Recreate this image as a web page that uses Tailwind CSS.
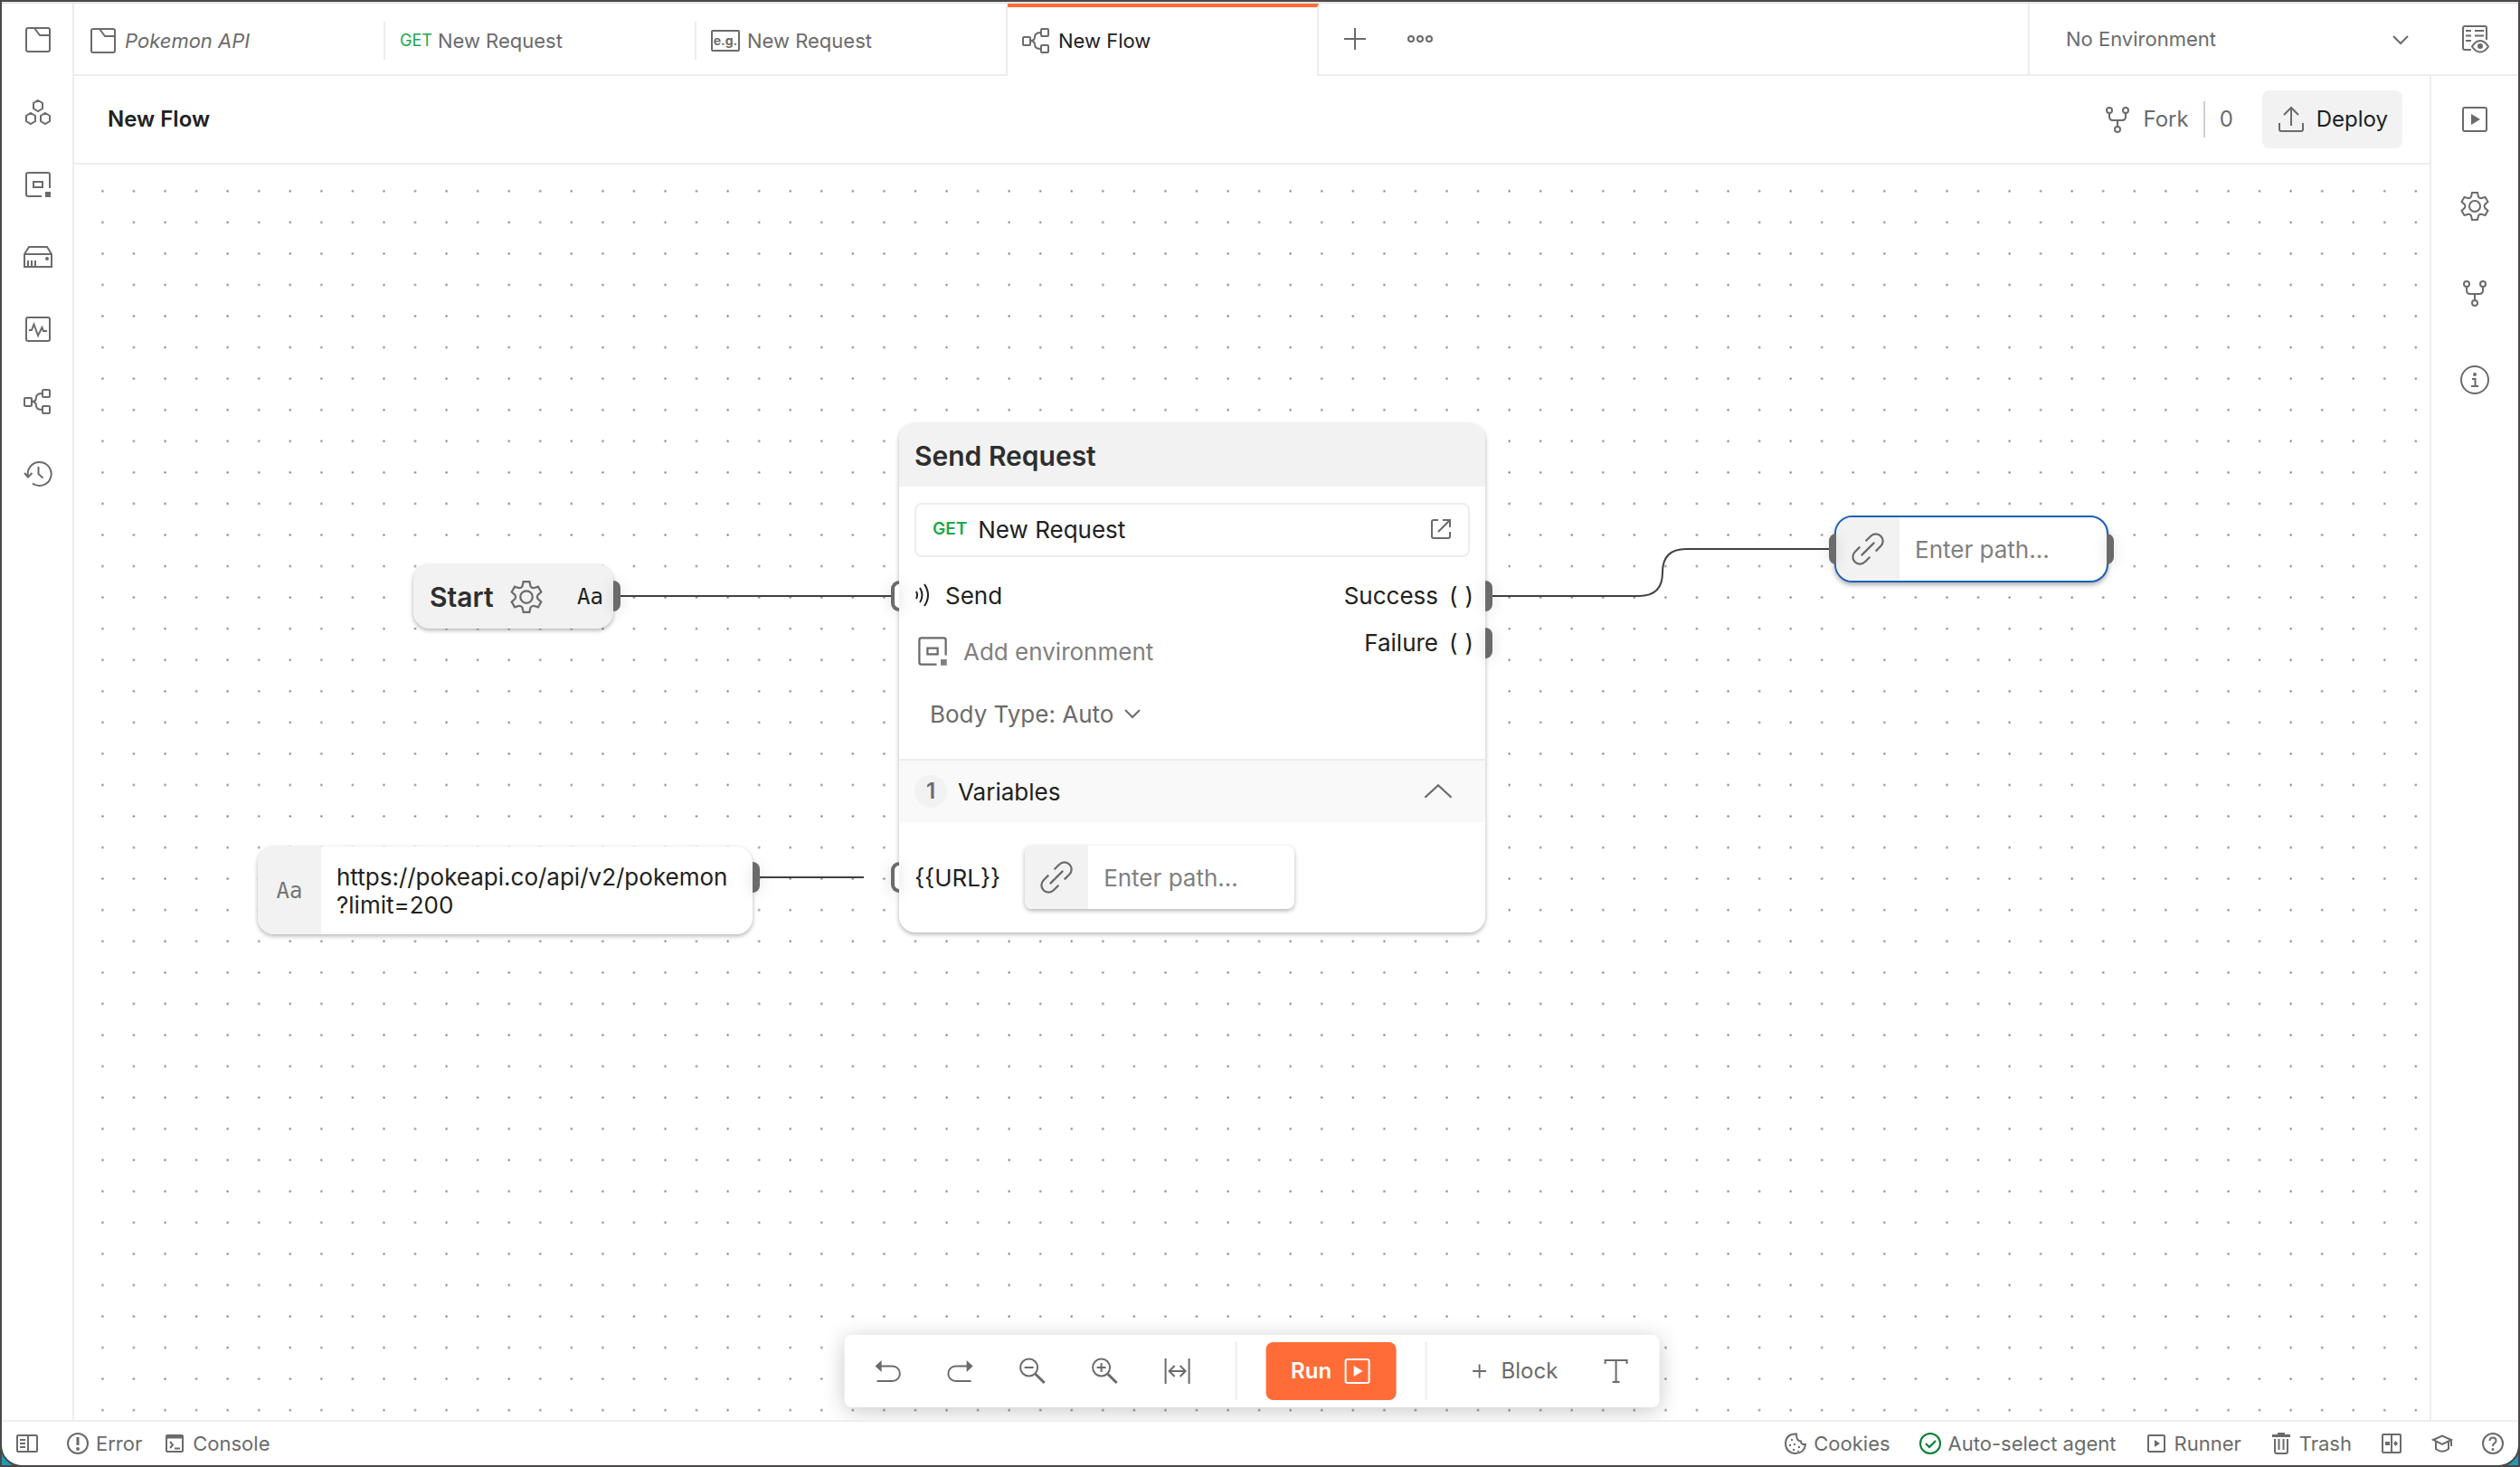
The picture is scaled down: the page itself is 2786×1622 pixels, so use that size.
<!DOCTYPE html>
<html lang="en">
<head>
<meta charset="utf-8">
<title>New Flow</title>
<script src="https://cdn.jsdelivr.net/npm/@tailwindcss/browser@4"></script>
</head>
<body class="font-[Inter,sans-serif] text-[#6b6b6b]">

<!-- Icon sprite -->
<svg class="hidden" aria-hidden="true">
  <defs>
    <symbol id="i-folder" viewBox="0 0 32 32"><rect x="3" y="3" width="26" height="26" rx="2"/><path d="M11 3h1l6 8h11"/></symbol>
    <symbol id="i-api" viewBox="0 0 32 32"><path d="M16 3l5 3v6l-5 3-5-3V6zM8 17l5 3v6l-5 3-5-3v-6zM24 17l5 3v6l-5 3-5-3v-6z"/></symbol>
    <symbol id="i-env" viewBox="0 0 32 32"><path d="M20 29H5q-2 0-2-2V5q0-2 2-2h22q2 0 2 2v15"/><rect x="11" y="13" width="10" height="6"/><path d="M24 24h6v6h-6z" fill="currentColor" stroke="none"/></symbol>
    <symbol id="i-mock" viewBox="0 0 32 32"><path d="M1 13l5-8h20l5 8v14H1zM1 13h30M5 20v7M9 20v7M13 20v7"/><circle cx="26" cy="18" r="2" fill="currentColor" stroke="none"/></symbol>
    <symbol id="i-monitor" viewBox="0 0 32 32"><rect x="3" y="3" width="26" height="26" rx="2"/><path d="M6 17h3l2.500-6.500L16 23l4.500-9L22 18h4"/></symbol>
    <symbol id="i-flow" viewBox="0 0 32 32"><rect x="1" y="12" width="8" height="9" rx="1"/><rect x="21" y="3" width="8" height="8" rx="1"/><rect x="21" y="21" width="8" height="8" rx="1"/><path d="M9 16q5 0 5-4.500Q14 7 21 7M9 16q5 0 5 4.500Q14 25 21 25"/></symbol>
    <symbol id="i-history" viewBox="0 0 32 32"><path d="M5 19A13 13 0 1 1 10 26.500M1 15l4 4.500L9.500 15M16.500 8v8l5 4.500"/></symbol>
    <symbol id="i-look" viewBox="0 0 32 32"><path d="M12 28H5q-2 0-2-2V4q0-2 2-2h22q2 0 2 2v13M6 7h6M16 7h10M6 12.500h6M16 12.500h10M6 18h6M13 24.500q4-6.500 9-6.500t9 6.500q-4 6-9 6t-9-6z"/><circle cx="22" cy="24" r="3" fill="currentColor" stroke="none"/></symbol>
    <symbol id="i-play" viewBox="0 0 32 32"><rect x="3" y="3" width="26" height="26" rx="2"/><path d="M12 10l10 6-10 6z" fill="currentColor" stroke="none"/></symbol>
    <symbol id="i-gear" viewBox="0 0 32 32"><path d="M13 1h6l1 4.500q1 1.800 3.100 1.800l4.400-1.400 3 5.200-3.400 3.100q-1.100 1.800 0 3.600l3.400 3.100-3 5.200-4.400-1.400q-2.100 0-3.100 1.800L19 31h-6l-1-4.500q-1-1.800-3.100-1.800l-4.400 1.400-3-5.200 3.400-3.100q1.100-1.800 0-3.600L1.500 11.100l3-5.200 4.400 1.400q2.100 0 3.100-1.800z"/><circle cx="16" cy="16" r="6"/></symbol>
    <symbol id="i-fork" viewBox="0 0 32 32"><circle cx="7" cy="6" r="3"/><circle cx="25" cy="6" r="3"/><circle cx="16" cy="27" r="3"/><path d="M7 9v4q0 4 4 4h10q4 0 4-4V9M16 17v7"/></symbol>
    <symbol id="i-info" viewBox="0 0 32 32"><circle cx="16" cy="16" r="15"/><path d="M13 15h3.500v8M12 23h8"/><circle cx="16" cy="10" r="2" fill="currentColor" stroke="none"/></symbol>
    <symbol id="i-upload" viewBox="0 0 32 32"><path d="M3 20v7q0 2 2 2h22q2 0 2-2v-7M16 3v20M8 11l8-8 8 8"/></symbol>
    <symbol id="i-down" viewBox="0 0 32 32"><path d="M8 12l8 8 8-8"/></symbol>
    <symbol id="i-up" viewBox="0 0 32 32"><path d="M3 22l13-12 13 12"/></symbol>
    <symbol id="i-plus" viewBox="0 0 32 32"><path d="M16 4v24M4 16h24"/></symbol>
    <symbol id="i-dots" viewBox="0 0 32 32"><circle cx="6" cy="16" r="3"/><circle cx="16" cy="16" r="3"/><circle cx="26" cy="16" r="3"/></symbol>
    <symbol id="i-link" viewBox="0 0 32 32"><path transform="rotate(-45 16 16)" d="M20 9h7a7 7 0 0 1 0 14h-7M12 9H5a7 7 0 0 0 0 14h7M7 16h18"/></symbol>
    <symbol id="i-open" viewBox="0 0 24 24"><path d="M9 2H4Q2 2 2 4v16q0 2 2 2h16q2 0 2-2v-5M14 2h8v8M22 2L9 15"/></symbol>
    <symbol id="i-signal" viewBox="0 0 18 28"><path d="M2 10q2 4 0 8M6 6q5 8 0 16M11 2q8 12 0 24"/></symbol>
    <symbol id="i-undo" viewBox="0 0 32 32"><path d="M2 10.500L9 4v13z" fill="currentColor" stroke="none"/><path d="M8 10.500h13a8 8 0 0 1 0 16.500H4"/></symbol>
    <symbol id="i-redo" viewBox="0 0 32 32"><path d="M30 10.500L23 4v13z" fill="currentColor" stroke="none"/><path d="M24 10.500H11a8 8 0 0 0 0 16.500h17"/></symbol>
    <symbol id="i-zoomout" viewBox="0 0 32 32"><circle cx="12" cy="12" r="9.500"/><path d="M7 12h10"/><path d="M19 19l10 10" stroke-width="3"/></symbol>
    <symbol id="i-zoomin" viewBox="0 0 32 32"><circle cx="12" cy="12" r="9.500"/><path d="M7 12h10M12 7v10"/><path d="M19 19l10 10" stroke-width="3"/></symbol>
    <symbol id="i-fit" viewBox="0 0 32 32"><path d="M3 2v28M29 2v28M7 16h18M13 10l-6 6 6 6M19 10l6 6-6 6"/></symbol>
    <symbol id="i-type" viewBox="0 0 32 32"><path d="M4 8V4h24v4M16 4v24M12 28h8"/></symbol>
    <symbol id="i-panel" viewBox="0 0 24 24"><rect x="1" y="3" width="22" height="18" rx="1"/><path d="M13 3v18M4 8h6M4 12h6M4 16h6"/></symbol>
    <symbol id="i-error" viewBox="0 0 24 24"><circle cx="12" cy="12" r="11"/><path d="M12 5v9" stroke-width="3"/><circle cx="12" cy="18" r="2" fill="currentColor" stroke="none"/></symbol>
    <symbol id="i-console" viewBox="0 0 24 24"><rect x="3" y="3" width="18" height="18" rx="1"/><path d="M3 5h18" stroke-width="3"/><path d="M7 10l3 3.500L7 17M12 17.500h6"/></symbol>
    <symbol id="i-cookie" viewBox="0 0 24 24"><path d="M13 1.500Q1.500 1 1 12q.5 10.500 11 11 10-.5 11-10-5 .5-5-3.500-5 0-5-8z"/><path d="M8 7v2M6 13v2M11 12v2M10 18v2M16 15v2M15 20v1"/></symbol>
    <symbol id="i-check" viewBox="0 0 24 24"><circle cx="12" cy="12" r="11"/><path d="M7 12l4 4 7-7"/></symbol>
    <symbol id="i-runner" viewBox="0 0 24 24"><rect x="3" y="3" width="18" height="18" rx="1"/><path d="M10 8l6 4-6 4z" fill="currentColor" stroke="none"/></symbol>
    <symbol id="i-trash" viewBox="0 0 24 24"><path d="M2 3.500h20" stroke-width="3"/><path d="M8 1h8M5 7v14q0 2 2 2h10q2 0 2-2V7M9.500 7v12M14.500 7v12"/></symbol>
    <symbol id="i-split" viewBox="0 0 24 24"><rect x="2" y="2" width="20" height="20" rx="1"/><path d="M12 2v20"/><path d="M5 10h5v4H5z" fill="currentColor" stroke="none"/><path d="M16.500 9l2.500 3-2.500 3-2.500-3z" fill="currentColor" stroke="none"/></symbol>
    <symbol id="i-learn" viewBox="0 0 24 24"><path d="M2 8l10-4.500L22 8l-10 5zM5 10v8q7 5.500 14 0v-8M22 8v7"/></symbol>
    <symbol id="i-help" viewBox="0 0 24 24"><circle cx="12" cy="12" r="11"/><path d="M8.500 9q0-3.500 3.500-3.500T15.500 9q0 2-2 3-1.500.8-1.500 3"/><circle cx="12" cy="18.500" r="1.500" fill="currentColor" stroke="none"/></symbol>
  </defs>
</svg>

<div class="flex min-h-screen flex-col border-2 border-[#4a4848] bg-[#1f9bb5]">
<div class="flex grow flex-col overflow-hidden rounded-b-[22px] border-t-2 border-[#e6e5e4] bg-white shadow-[0_0_0_2px_#4a4848]">

  <div class="flex grow">
    <!-- Left rail -->
    <nav class="flex w-20 shrink-0 flex-col border-r-2 border-[#ededed] pl-0.5" aria-label="Workspace">
      <button class="grid h-20 place-items-center" aria-label="Collections"><svg class="size-8 fill-none stroke-current stroke-2"><use href="#i-folder"/></svg></button>
      <button class="grid h-20 place-items-center" aria-label="APIs"><svg class="size-8 fill-none stroke-current stroke-2"><use href="#i-api"/></svg></button>
      <button class="grid h-20 place-items-center" aria-label="Environments"><svg class="size-8 fill-none stroke-current stroke-2"><use href="#i-env"/></svg></button>
      <button class="grid h-20 place-items-center" aria-label="Mock servers"><svg class="size-8 fill-none stroke-current stroke-2"><use href="#i-mock"/></svg></button>
      <button class="grid h-20 place-items-center" aria-label="Monitors"><svg class="size-8 fill-none stroke-current stroke-2"><use href="#i-monitor"/></svg></button>
      <button class="grid h-20 place-items-center" aria-label="Flows"><svg class="size-8 fill-none stroke-current stroke-2"><use href="#i-flow"/></svg></button>
      <button class="grid h-20 place-items-center" aria-label="History"><svg class="size-8 fill-none stroke-current stroke-2"><use href="#i-history"/></svg></button>
    </nav>

    <div class="flex min-w-0 grow flex-col">
      <!-- Tab bar -->
      <div class="flex h-20 items-center border-b-2 border-[#ededed] text-[22px]">
        <button class="flex h-full w-[344px] items-center border-t-4 border-transparent pl-4"><span class="flex grow items-center gap-2"><svg class="size-8 fill-none stroke-current stroke-2"><use href="#i-folder"/></svg><i>Pokemon API</i></span><span class="h-[42px] w-0.5 bg-[#ededed]"></span></button>
        <button class="flex h-full w-[344px] items-center border-t-4 border-transparent pl-4"><span class="flex grow items-center gap-[6px]"><span class="text-lg text-[#1ba94c]">GET</span>New Request</span><span class="h-[42px] w-0.5 bg-[#ededed]"></span></button>
        <button class="flex h-full w-[344px] items-center gap-2 border-t-4 border-r-2 border-t-transparent border-r-[#ededed] pl-4"><span class="grid h-6 w-8 place-items-center rounded-xs border-2 border-current text-sm leading-4 font-bold">e.g.</span>New Request</button>
        <button class="relative -mb-0.5 flex h-20 w-[344px] items-center gap-2 border-t-4 border-r-2 border-t-[#ff6c37] border-r-[#ededed] bg-white pb-0.5 pl-4 text-[#212121]"><svg class="size-8 fill-none stroke-[#6b6b6b] stroke-2"><use href="#i-flow"/></svg>New Flow</button>
        <button class="ml-1 grid h-full w-18 place-items-center" aria-label="New tab"><svg class="size-8 fill-none stroke-current stroke-2"><use href="#i-plus"/></svg></button>
        <button class="grid h-full w-18 place-items-center" aria-label="Tab options"><svg class="size-8 fill-none stroke-current stroke-2"><use href="#i-dots"/></svg></button>
        <div class="relative ml-auto h-full w-[446px] border-l-2 border-[#ededed]">
          <select class="h-full w-full appearance-none bg-transparent pl-10" aria-label="Environment"><option>No Environment</option></select>
          <svg class="pointer-events-none absolute top-6 right-[18px] size-8 fill-none stroke-current stroke-2"><use href="#i-down"/></svg>
        </div>
        <button class="grid h-full w-24 place-items-center" aria-label="Environment quick look"><svg class="size-8 fill-none stroke-current stroke-2"><use href="#i-look"/></svg></button>
      </div>

      <div class="flex grow">
        <div class="flex min-w-0 grow flex-col">
          <!-- Flow header -->
          <header class="flex h-[98px] items-center border-b-2 border-[#ededed] pr-[30px] pl-[37px] text-2xl">
            <h1 class="grow font-semibold text-[#212121]">New Flow</h1>
            <div class="flex items-center gap-4">
              <button class="flex items-center gap-3"><svg class="size-8 fill-none stroke-current stroke-2"><use href="#i-fork"/></svg>Fork</button>
              <span class="h-10 w-0.5 bg-[#cfcfcf]"></span>
              <span>0</span>
            </div>
            <button class="ml-8 flex h-16 items-center gap-3 rounded-lg bg-[#f2f2f2] px-4 text-[#212121]"><svg class="size-8 fill-none stroke-[#6b6b6b] stroke-2"><use href="#i-upload"/></svg>Deploy</button>
          </header>

          <!-- Canvas -->
          <main class="relative grow overflow-hidden text-[26px] text-[#212121]">
            <svg class="absolute inset-0 h-full w-full" aria-hidden="true">
              <defs>
                <pattern id="grid" x="14" y="12" width="34.560" height="34.560" patternUnits="userSpaceOnUse"><rect x="16.400" y="16.300" width="2" height="2" fill="#6e6e6e"/></pattern>
              </defs>
              <rect width="100%" height="100%" fill="url(#grid)"/>
              <g fill="none" stroke="#424040" stroke-width="2">
                <path d="M604 477h300"/>
                <path d="M758 788h115"/>
                <path d="M1568 477h162q26 0 26-26t26-26h158"/>
              </g>
            </svg>

            <!-- Start block -->
            <section class="absolute top-[442px] left-[375px] flex h-[71px] w-[221px] items-center rounded-[18px] bg-[#f2f2f2] pr-[11px] pl-[18px] shadow-[0_2px_5px_rgba(0,0,0,0.3)]">
              <h2 class="text-3xl font-semibold text-[#2e2e2e]">Start</h2>
              <button class="ml-[18px]" aria-label="Start settings"><svg class="size-9 fill-none stroke-[#6b6b6b] stroke-2"><use href="#i-gear"/></svg></button>
              <span class="ml-auto font-['DejaVu_Sans_Mono',monospace] text-2xl">Aa</span>
              <span class="absolute top-[18px] -right-2 h-[34px] w-2 rounded-r-lg bg-[#6b6b6b] shadow-[0_2px_16px_rgba(0,0,0,0.15)]"></span>
            </section>

            <!-- URL text block -->
            <section class="absolute top-[754px] left-[203px] flex h-[97px] w-[547px] rounded-[18px] bg-white shadow-[0_2px_5px_rgba(0,0,0,0.3)]">
              <span class="grid w-[70px] place-items-center rounded-l-[18px] bg-[#f2f2f2] font-['DejaVu_Sans_Mono',monospace] text-2xl text-[#757575]">Aa</span>
              <textarea class="my-auto h-[62px] grow resize-none overflow-hidden pl-[17px] leading-[31px]" aria-label="Text value">https://pokeapi.co/api/v2/pokemon
?limit=200</textarea>
              <span class="absolute top-[17px] -right-2 h-[34px] w-2 rounded-r-lg bg-[#6b6b6b] shadow-[0_2px_16px_rgba(0,0,0,0.15)]"></span>
            </section>

            <!-- Send Request block -->
            <section class="absolute top-[286px] left-[912px] flex w-[648px] flex-col rounded-[18px] bg-white shadow-[0_2px_5px_rgba(0,0,0,0.3)]">
              <h2 class="flex h-[70px] items-center rounded-t-[18px] bg-[#f2f2f2] px-[17px] pt-0.5 text-3xl font-semibold text-[#2e2e2e]">Send Request</h2>
              <a href="#" class="mx-[17px] mt-[18px] flex h-[60px] items-center gap-3 rounded-lg border-2 border-[#ededed] px-[18px] pb-0.5">
                <span class="text-[19px] font-semibold text-[#1ba94c]">GET</span>
                <span class="grow">New Request</span>
                <svg class="size-6 fill-none stroke-[#6b6b6b] stroke-2"><use href="#i-open"/></svg>
              </a>
              <div class="mt-4 flex">
                <div class="grow">
                  <div class="relative flex h-[52px] items-center gap-4 pl-[17px]">
                    <span class="absolute top-[10px] -left-[9px] h-[34px] w-[9px] rounded-l-[9px] border-4 border-r-0 border-[#6b6b6b] bg-white shadow-[0_2px_16px_rgba(0,0,0,0.15)]"></span>
                    <svg class="h-7 w-[18px] fill-none stroke-current stroke-2"><use href="#i-signal"/></svg>Send
                  </div>
                  <button class="flex h-[72px] items-center gap-4 pl-[19px] text-[#808080]"><svg class="size-9 fill-none stroke-[#6b6b6b] stroke-2"><use href="#i-env"/></svg>Add environment</button>
                  <label class="flex h-[66px] items-center gap-1 pl-[34px] text-[#6b6b6b]">
                    <select class="appearance-none bg-transparent" aria-label="Body type"><option>Body Type: Auto</option></select>
                    <svg class="size-8 fill-none stroke-current stroke-2"><use href="#i-down"/></svg>
                  </label>
                </div>
                <div>
                  <div class="relative flex h-[52px] items-center justify-end gap-3 pr-[13px]">Success<span class="flex gap-2"><span>(</span><span>)</span></span>
                    <span class="absolute top-[10px] -right-2 h-[34px] w-2 rounded-r-lg bg-[#6b6b6b] shadow-[0_2px_16px_rgba(0,0,0,0.15)]"></span>
                  </div>
                  <div class="relative flex h-[52px] items-center justify-end gap-3 pr-[13px]">Failure<span class="flex gap-2"><span>(</span><span>)</span></span>
                    <span class="absolute top-[10px] -right-2 h-[34px] w-2 rounded-r-lg bg-[#6b6b6b] shadow-[0_2px_16px_rgba(0,0,0,0.15)]"></span>
                  </div>
                </div>
              </div>
              <button class="mt-[17px] flex h-[70px] items-center gap-3 border-t-2 border-[#ededed] bg-[#f9f9f9] pr-[34px] pl-[17px]">
                <span class="grid size-9 place-items-center rounded-full bg-[#f2f2f2] text-2xl font-semibold text-[#6b6b6b]">1</span>
                <span class="grow text-left">Variables</span>
                <svg class="size-9 fill-none stroke-[#6b6b6b] stroke-2"><use href="#i-up"/></svg>
              </button>
              <div class="relative flex h-[122px] items-center gap-[27px] pl-[17px]">
                <span class="absolute top-[44px] -left-[9px] h-[34px] w-[9px] rounded-l-[9px] border-4 border-r-0 border-[#6b6b6b] bg-white shadow-[0_2px_16px_rgba(0,0,0,0.15)]"></span>
                <label for="url-path">{{URL}}</label>
                <div class="flex h-[70px] w-[298px] overflow-hidden rounded-lg bg-white shadow-[0_2px_5px_rgba(0,0,0,0.3)]">
                  <span class="grid w-[70px] shrink-0 place-items-center bg-[#f2f2f2]"><svg class="size-9 fill-none stroke-[#6b6b6b] stroke-2"><use href="#i-link"/></svg></span>
                  <input id="url-path" class="min-w-0 grow pl-[17px] placeholder:text-[#808080]" placeholder="Enter path...">
                </div>
              </div>
            </section>

            <!-- Output block, selected -->
            <section class="absolute top-[388px] left-[1946px] flex h-[74px] w-[303px] rounded-[20px] border-2 border-[#1a62b8] bg-white shadow-[0_3px_5px_rgba(0,0,0,0.3)]">
              <span class="grid w-[70px] shrink-0 place-items-center rounded-l-[18px] bg-[#f2f2f2]"><svg class="size-9 fill-none stroke-[#6b6b6b] stroke-2"><use href="#i-link"/></svg></span>
              <input class="min-w-0 grow pl-[17px] placeholder:text-[#808080]" placeholder="Enter path..." aria-label="Path">
              <span class="absolute top-[18px] -left-2 h-[34px] w-2 rounded-l-lg bg-[#6b6b6b] shadow-[0_2px_16px_rgba(0,0,0,0.15)]"></span>
              <span class="absolute top-[18px] -right-2 h-[34px] w-2 rounded-r-lg bg-[#6b6b6b] shadow-[0_2px_16px_rgba(0,0,0,0.15)]"></span>
            </section>

            <!-- Floating toolbar -->
            <div class="absolute bottom-[14px] left-1/2 flex h-20 -translate-x-1/2 items-center rounded-lg bg-white px-2 text-2xl text-[#6b6b6b] shadow-[0_4px_24px_rgba(0,0,0,0.22)]" role="toolbar">
              <button class="grid h-16 w-20 place-items-center" aria-label="Undo"><svg class="size-8 fill-none stroke-current stroke-2"><use href="#i-undo"/></svg></button>
              <button class="grid h-16 w-20 place-items-center" aria-label="Redo"><svg class="size-8 fill-none stroke-current stroke-2"><use href="#i-redo"/></svg></button>
              <button class="grid h-16 w-20 place-items-center" aria-label="Zoom out"><svg class="size-8 fill-none stroke-current stroke-2"><use href="#i-zoomout"/></svg></button>
              <button class="grid h-16 w-20 place-items-center" aria-label="Zoom in"><svg class="size-8 fill-none stroke-current stroke-2"><use href="#i-zoomin"/></svg></button>
              <button class="grid h-16 w-20 place-items-center" aria-label="Fit to screen"><svg class="size-8 fill-none stroke-current stroke-2"><use href="#i-fit"/></svg></button>
              <span class="mr-8 ml-6 h-16 w-0.5 bg-[#ededed]"></span>
              <button class="flex h-16 w-36 items-center justify-center gap-3 rounded-lg bg-[#ff6c37] font-semibold text-white">Run<svg class="size-8 fill-none stroke-current stroke-2"><use href="#i-play"/></svg></button>
              <span class="ml-8 h-16 w-0.5 bg-[#ededed]"></span>
              <button class="ml-6 flex h-16 items-center gap-[14px] px-6"><svg class="size-5 fill-none stroke-current stroke-3"><use href="#i-plus"/></svg>Block</button>
              <button class="grid h-16 w-20 place-items-center" aria-label="Add text"><svg class="size-8 fill-none stroke-current stroke-2"><use href="#i-type"/></svg></button>
            </div>
          </main>
        </div>

        <!-- Right rail -->
        <aside class="flex w-[98px] shrink-0 flex-col border-l-2 border-[#ededed]">
          <button class="grid h-24 place-items-center" aria-label="Runs"><svg class="size-8 fill-none stroke-current stroke-2"><use href="#i-play"/></svg></button>
          <button class="grid h-24 place-items-center" aria-label="Settings"><svg class="size-8 fill-none stroke-current stroke-2"><use href="#i-gear"/></svg></button>
          <button class="grid h-24 place-items-center" aria-label="Forks"><svg class="size-8 fill-none stroke-current stroke-2"><use href="#i-fork"/></svg></button>
          <button class="grid h-24 place-items-center" aria-label="Information"><svg class="size-8 fill-none stroke-current stroke-2"><use href="#i-info"/></svg></button>
        </aside>
      </div>
    </div>
  </div>

  <!-- Status bar -->
  <footer class="flex h-[50px] items-center justify-between border-t-2 border-[#ededed] px-4 text-[22px]">
    <div class="flex items-center gap-6">
      <button class="mr-2" aria-label="Toggle sidebar"><svg class="size-6 fill-none stroke-current stroke-2"><use href="#i-panel"/></svg></button>
      <button class="flex items-center gap-2"><svg class="size-6 fill-none stroke-current stroke-2"><use href="#i-error"/></svg>Error</button>
      <button class="flex items-center gap-2"><svg class="size-6 fill-none stroke-current stroke-2"><use href="#i-console"/></svg>Console</button>
    </div>
    <div class="flex items-center gap-8">
      <button class="flex items-center gap-2"><svg class="size-6 fill-none stroke-current stroke-2"><use href="#i-cookie"/></svg>Cookies</button>
      <button class="flex items-center gap-2"><svg class="size-6 fill-none stroke-[#007f31] stroke-2"><use href="#i-check"/></svg>Auto-select agent</button>
      <button class="flex items-center gap-2"><svg class="size-6 fill-none stroke-current stroke-2"><use href="#i-runner"/></svg>Runner</button>
      <button class="flex items-center gap-2"><svg class="size-6 fill-none stroke-current stroke-2"><use href="#i-trash"/></svg>Trash</button>
      <button aria-label="Two-pane view"><svg class="size-6 fill-none stroke-current stroke-2"><use href="#i-split"/></svg></button>
      <button aria-label="Learning center"><svg class="size-6 fill-none stroke-current stroke-2"><use href="#i-learn"/></svg></button>
      <button aria-label="Help"><svg class="size-6 fill-none stroke-current stroke-2"><use href="#i-help"/></svg></button>
    </div>
  </footer>
</div>
</div>
</body>
</html>
